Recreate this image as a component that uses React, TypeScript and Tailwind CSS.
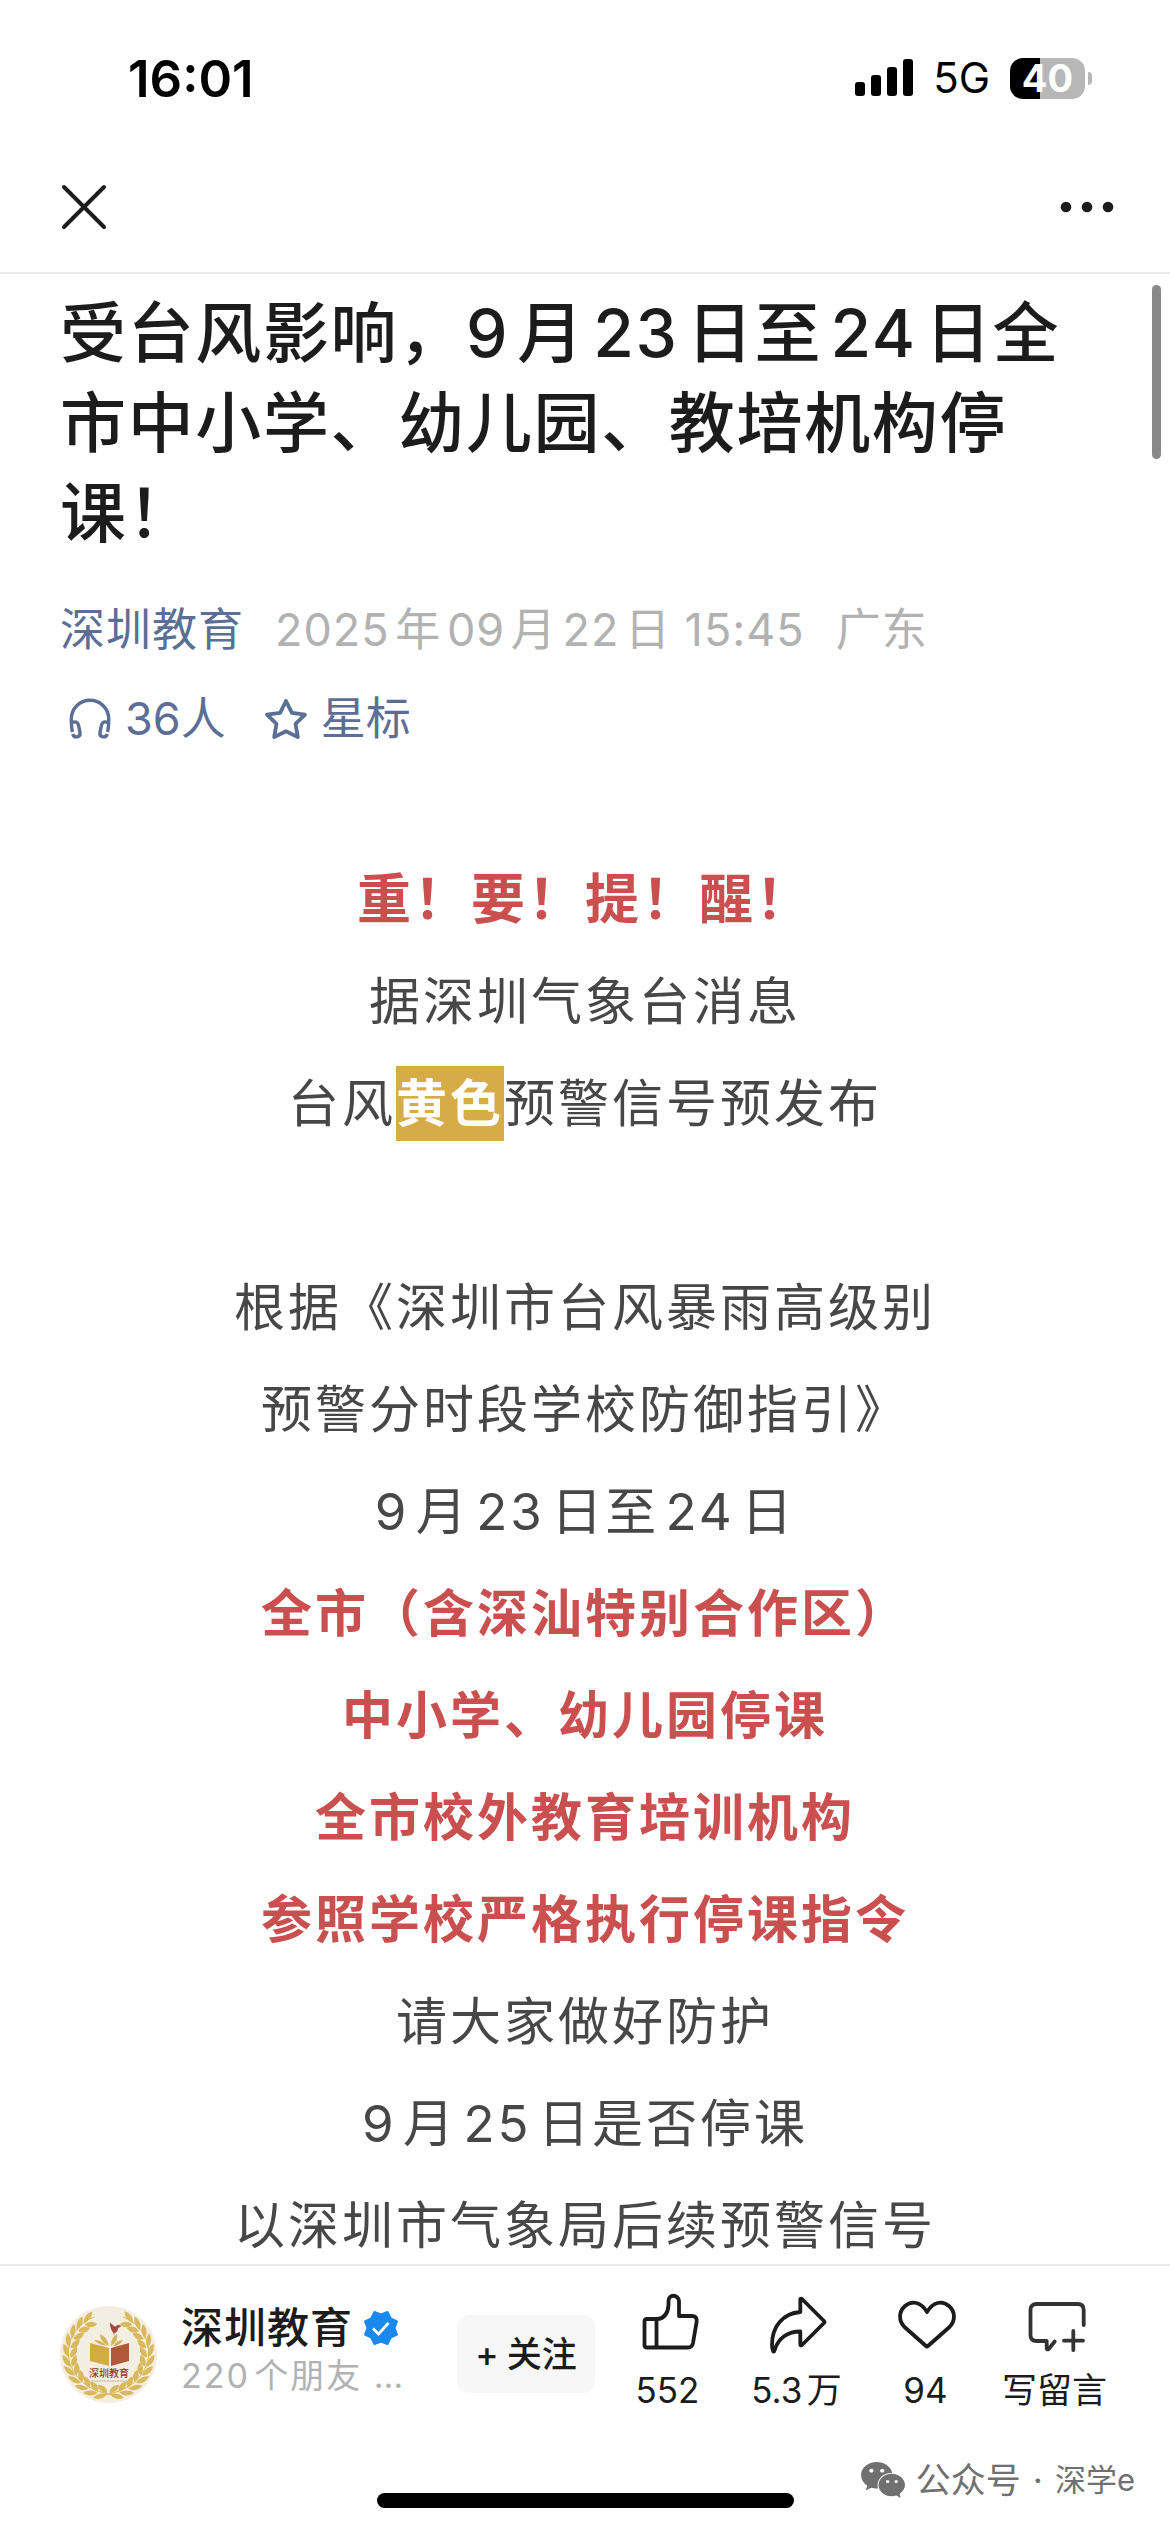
import { clsx } from "clsx";
import { useState, type ReactNode } from "react";
import { FaWeixin } from "react-icons/fa";

type Line = {
  text?: ReactNode;
  strong?: boolean;
  large?: boolean;
};

const lines: Line[] = [
  { text: "重！要！提！醒！", strong: true, large: true },
  { text: "据深圳气象台消息" },
  {
    text: (
      <>
        台风
        <strong className="bg-[#d7ac48] py-[7px] text-white">黄色</strong>
        预警信号预发布
      </>
    ),
  },
  {},
  { text: "根据《深圳市台风暴雨高级别" },
  { text: "预警分时段学校防御指引》" },
  { text: "9月23日至24日" },
  { text: "全市（含深汕特别合作区）", strong: true },
  { text: "中小学、幼儿园停课", strong: true },
  { text: "全市校外教育培训机构", strong: true },
  { text: "参照学校严格执行停课指令", strong: true },
  { text: "请大家做好防护" },
  { text: "9月25日是否停课" },
  { text: "以深圳市气象局后续预警信号" },
];

const leafAngles = [30, 44, 58, 72, 86, 100, 114, 128, 142, 156, 170];

function StatusBar() {
  return (
    <div className="flex h-[142px] shrink-0 items-center justify-between pt-[14px] pr-[78px] pl-[128px] text-black">
      <span className="text-[51px] leading-none font-semibold">16:01</span>
      <div className="flex items-center">
        <svg className="h-[38px] w-[58px]" viewBox="0 0 58 38" aria-hidden="true">
          <rect x="0" y="23" width="10" height="14" rx="3" />
          <rect x="16" y="16" width="10" height="21" rx="3" />
          <rect x="32" y="8" width="10" height="29" rx="3" />
          <rect x="48" y="0" width="10" height="37" rx="3" />
        </svg>
        <span className="ml-[20px] text-[42px] leading-none">5G</span>
        <div className="ml-[20px] flex h-[41px] w-[75px] items-center justify-center rounded-[13px] bg-linear-to-r from-black from-40% to-[#b7b7b7] to-40% text-[38px] leading-none font-bold text-white">
          40
        </div>
        <div className="ml-[3px] h-[13px] w-[4px] rounded-r-full bg-[#b7b7b7]" />
      </div>
    </div>
  );
}

function NavBar() {
  return (
    <nav className="flex h-[132px] shrink-0 items-center justify-between border-b-2 border-[#e9e9e9] pr-[55px] pl-[60px]">
      <button type="button" aria-label="关闭">
        <svg className="size-[48px]" viewBox="0 0 48 48" fill="none" stroke="#1c1c1c" strokeWidth="4" strokeLinecap="round">
          <path d="M4 4 44 44M44 4 4 44" />
        </svg>
      </button>
      <button type="button" aria-label="更多">
        <svg className="h-[14px] w-[56px]" viewBox="0 0 56 14" fill="#1c1c1c">
          <circle cx="7" cy="7" r="5.3" />
          <circle cx="28" cy="7" r="5.3" />
          <circle cx="49" cy="7" r="5.3" />
        </svg>
      </button>
    </nav>
  );
}

function HeadphonesIcon() {
  return (
    <svg className="size-[44px]" viewBox="0 0 44 44" fill="none" stroke="currentColor" strokeWidth="3.4" strokeLinejoin="round" aria-hidden="true">
      <path d="M4.500 35C3.500 31 3.300 27 3.300 22a18.700 18.700 0 0 1 37.400 0c0 5-.2 9-1.200 13" />
      <path d="M4 25.500c4-1.500 6 0 6.600 3l1.400 7c.8 5-6 6-7.200 1.500M40 25.500c-4-1.500-6 0-6.600 3l-1.400 7c-.8 5 6 6 7.200 1.500" />
    </svg>
  );
}

function StarIcon() {
  return (
    <svg className="size-[44px]" viewBox="0 0 44 44" fill="none" stroke="currentColor" strokeWidth="3.8" strokeLinejoin="round" aria-hidden="true">
      <path d="M22 4l5.900 11.900L41 17.600l-9.500 9.200 2.300 13.300L22 34.200l-11.800 5.900 2.300-13.300L3 17.600l13.100-1.700z" />
    </svg>
  );
}

function Article() {
  return (
    <main className="h-full overflow-y-auto px-[60px] pt-[14px] [scrollbar-width:none]">
      <h1 className="text-[66px] leading-[90px] font-medium tracking-wide">
        受台风影响，9月23日至24日全市中小学、幼儿园、教培机构停课！
      </h1>
      <div className="mt-[42px] flex flex-wrap gap-[31px] text-[45px] leading-[60px] tracking-[1px] text-[#b2b2b2]">
        <a href="#account" className="text-[#5b6f96]">
          深圳教育
        </a>
        <time dateTime="2025-09-22T15:45">2025年09月22日 15:45</time>
        <span>广东</span>
      </div>
      <div className="mt-[29px] ml-[8px] flex gap-[38px] text-[45px] leading-[60px] text-[#5b6f96] [text-autospace:no-autospace]">
        <button type="button" className="flex items-center gap-[13px]">
          <HeadphonesIcon />
          36人
        </button>
        <button type="button" className="flex items-center gap-[13px]">
          <StarIcon />
          星标
        </button>
      </div>
      <article className="mt-[100px] text-center text-[51px] leading-[102px] tracking-[3px] text-[#474747]">
        {lines.map((line, i) => (
          <p
            key={i}
            className={clsx(
              "min-h-[102px]",
              line.strong && "font-bold text-[#c9504f]",
              line.large && "text-[54px]",
            )}
          >
            {line.text}
          </p>
        ))}
      </article>
    </main>
  );
}

function Branch() {
  return (
    <>
      <path d="M34 11C10 20 0 48 16 69c8 11 20 17 37 20" fill="none" stroke="#d9b95c" strokeWidth="1" />
      {leafAngles.map((angle) => (
        <path
          key={angle}
          transform={`rotate(${-angle} 48.5 48.5)`}
          fill="#d9b95c"
          d="M43 9.500c2-5.500 7-7.500 13-6.500-2 4.500-7 6.500-13 6.500zM43 10.500c5-1 9 1 11 6-6 1.500-10-1-11-6z"
        />
      ))}
    </>
  );
}

function Avatar() {
  return (
    <svg className="size-[97px] shrink-0" viewBox="0 0 97 97" role="img" aria-label="深圳教育">
      <circle cx="48.5" cy="48.5" r="48.5" fill="#f3eee1" />
      <Branch />
      <g transform="translate(97 0) scale(-1 1)">
        <Branch />
      </g>
      <path d="M30 37l19 5v18l-19-5z" fill="#d3ab45" />
      <path d="M51 42l18-5v18l-18 5z" fill="#b1583a" />
      <path d="M49 40q-2-9-9-12 0 8 9 12zM47 40q-7-7-13-6 4 5 13 6zM51 40q0-9 6-12 2 7-6 12zM53 40q4-6 10-6-3 6-10 6z" fill="#d3b45c" />
      <path d="M50 17l5 4 3-2 3 1-3 2q-1 5-4 5-3-2-4-10zM54 26v3" fill="#a5483a" stroke="#a5483a" strokeWidth=".6" />
      <text x="49" y="71" textAnchor="middle" fontSize="10" fontWeight="500" fill="#8b3b2c" fontFamily="Noto Sans CJK SC">
        深圳教育
      </text>
      <path d="M31 75h37" stroke="#b9aa94" strokeWidth="1.2" strokeDasharray="2 .6" />
    </svg>
  );
}

function VerifiedIcon() {
  return (
    <svg className="size-[36px]" viewBox="0 0 36 36" role="img" aria-label="已认证">
      <path
        fill="#1989ee"
        stroke="#1989ee"
        strokeWidth="2"
        strokeLinejoin="round"
        d="M11.500 2L18 4.500 24.500 2 27.700 8.300 34 11.500 31.500 18 34 24.500 27.700 27.700 24.500 34 18 31.500 11.500 34 8.300 27.700 2 24.500 4.500 18 2 11.500 8.300 8.300z"
      />
      <path d="M10 18.500l5.500 5.500 10-11" fill="none" stroke="#fff" strokeWidth="2.8" />
    </svg>
  );
}

const iconProps = {
  className: "size-[64px]",
  viewBox: "0 0 64 64",
  fill: "none",
  stroke: "#1c1c1c",
  strokeWidth: 3.8,
  strokeLinejoin: "round",
  strokeLinecap: "round",
  "aria-hidden": true,
} as const;

const actions = [
  {
    label: "552",
    icon: (
      <svg {...iconProps}>
        <path d="M10.500 29H22c7-1 10-7 10.500-14v-4c0-7 9.500-7 10.500 0v15h13c4 0 5.300 3 4.600 6l-3.600 21c-.6 3-2 4.500-5 4.500H10.500c-1 0-2-1-2-2V31c0-1 1-2 2-2zM20.500 29v28.500" />
      </svg>
    ),
  },
  {
    label: "5.3万",
    icon: (
      <svg {...iconProps}>
        <path d="M35.300 9c.7-.6 1.200-.4 1.700 0l22 22q1 1 0 2L37 55c-.7.700-1.700.4-1.700-.6V41.500C23 41.500 13 48 9.500 60.500 8.500 64 7 59 7 55 7 36 18 23.500 35.300 22z" />
      </svg>
    ),
  },
  {
    label: "94",
    icon: (
      <svg {...iconProps}>
        <path d="M33 22c-6-10-15-12-22-6-6.500 5.500-6.500 15-.5 21L32 56q1 1 2 0l21.500-19c6-6 6-15.500-.5-21-7-6-16-4-22 6z" />
      </svg>
    ),
  },
  {
    label: "写留言",
    icon: (
      <svg {...iconProps} stroke="#333">
        <path d="M60.700 35V20c0-4-2-6-6-6H13.500c-4 0-6 2-6 6v25c0 4 2 6 6 6h10.200v7.500q.6 1.600 2 .5l6-7.500M50.300 41v19M41 50.700h19" />
      </svg>
    ),
  },
];

function Footer() {
  const [followed, setFollowed] = useState(false);

  return (
    <footer className="relative h-[268px] shrink-0 border-t-2 border-[#e9e9e9] pt-[24px]">
      <div className="flex h-[128px] items-center pr-[51px] pl-[60px]">
        <Avatar />
        <div className="ml-[24px] flex-1 pb-[4px]">
          <div className="flex items-center gap-[10px] text-[42px] leading-[48px] font-medium tracking-[1px]">
            深圳教育
            <VerifiedIcon />
          </div>
          <p className="text-[34px] leading-[48px] tracking-[2px] whitespace-nowrap text-[#b2b2b2]">
            220个朋友 …
          </p>
        </div>
        <button
          type="button"
          aria-pressed={followed}
          onClick={() => setFollowed(!followed)}
          className="mr-[8px] flex h-[78px] w-[138px] items-center justify-center gap-[8px] rounded-[12px] bg-[#f7f7f7] text-[35px] font-medium"
        >
          <span>+</span>
          <span>关注</span>
        </button>
        <div className="grid w-[516px] grid-cols-4 pb-[8px]">
          {actions.map((action) => (
            <button
              key={action.label}
              type="button"
              className="flex flex-col items-center gap-[16px] text-[35px] leading-[40px] whitespace-nowrap"
            >
              {action.icon}
              {action.label}
            </button>
          ))}
        </div>
      </div>
      <div className="mx-auto mt-[75px] h-[15px] w-[417px] rounded-full bg-black" />
      <div className="absolute right-[35px] bottom-[32px] flex h-[40px] items-center text-[#707070]">
        <FaWeixin className="mr-[10px] size-[46px]" />
        <span className="text-[35px]">公众号</span>
        <span className="mx-[12px] text-[35px]">·</span>
        <span className="text-[31px] [text-autospace:no-autospace]">深学e</span>
      </div>
    </footer>
  );
}

export default function App() {
  return (
    <div className="flex h-screen flex-col bg-white font-['Inter','Noto_Sans_CJK_SC',sans-serif] text-[#1c1c1c] [text-autospace:normal]">
      <StatusBar />
      <NavBar />
      <div className="relative min-h-0 flex-1">
        <Article />
        <div className="absolute top-[11px] right-[9px] h-[174px] w-[9px] rounded-full bg-[#898989]" />
      </div>
      <Footer />
    </div>
  );
}
